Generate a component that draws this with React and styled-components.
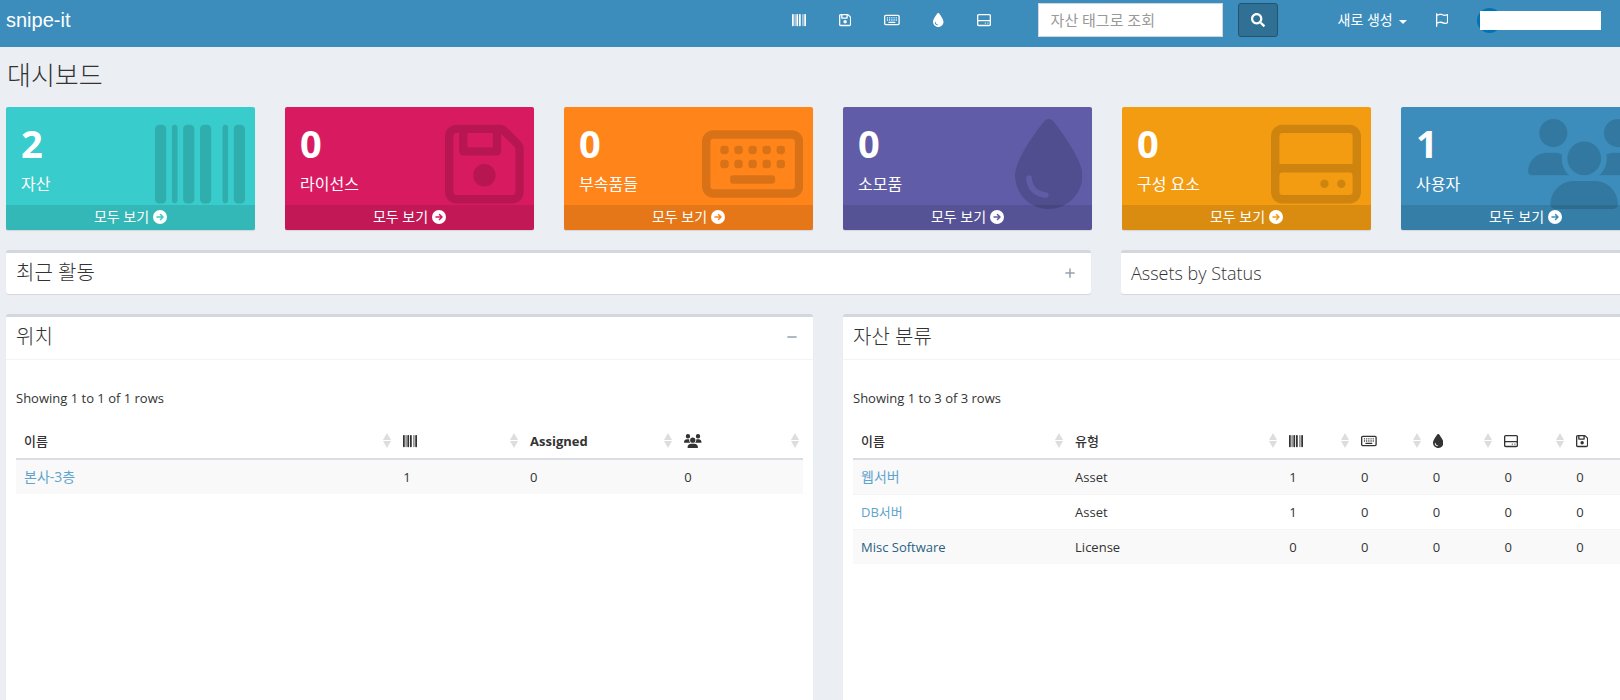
import React from "react";
import styled, { createGlobalStyle } from "styled-components";
import {
  FaBarcode,
  FaRegFloppyDisk,
  FaRegKeyboard,
  FaDroplet,
  FaRegHardDrive,
  FaUsers,
  FaRegFlag,
  FaPlus,
  FaMinus,
} from "react-icons/fa6";
import { FaSearch } from "react-icons/fa";

const GlobalStyle = createGlobalStyle`
  *, *::before, *::after { box-sizing: border-box; }
  body {
    margin: 0;
    background: #ebeff4;
    color: #333;
    font: 400 13px/20px "Open Sans", "Noto Sans CJK KR", sans-serif;
  }
  button, input { font: inherit; }
  a { text-decoration: none; }
  svg { display: block; flex: none; height: 1em; }
`;

/* Each glyph keeps the width of its own view box. */
const FloppyIcon = styled(FaRegFloppyDisk)`
  width: 0.875em;
`;
const KeyboardIcon = styled(FaRegKeyboard)`
  width: 1.125em;
`;
const DropletIcon = styled(FaDroplet)`
  width: 0.75em;
`;
const UsersIcon = styled(FaUsers)`
  width: 1.25em;
`;
const FlagIcon = styled(FaRegFlag)`
  width: 0.875em;
`;

const Page = styled.div`
  display: flex;
  flex-direction: column;
  min-height: 100vh;
  overflow-x: clip;
`;

const Header = styled.header`
  display: flex;
  align-items: flex-start;
  height: 47px;
  padding: 3px 18px 0 6px;
  background: #3c8dbc;
  color: #fff;
`;

const Brand = styled.a`
  margin-right: auto;
  color: #fff;
  font: 400 20px/34px "Liberation Sans", sans-serif;
`;

const IconNav = styled.nav`
  display: flex;
  gap: 33px;
  margin-right: 47px;
`;

const IconLink = styled.a`
  display: flex;
  align-items: center;
  height: 34px;
  color: #fff;
  font-size: 14px;
`;

const SearchForm = styled.form`
  display: flex;
  gap: 15px;
  margin-right: 60px;
`;

const SearchInput = styled.input`
  width: 185px;
  height: 34px;
  padding: 6px 12px;
  border: 1px solid #d2d6de;
  border-radius: 0;
  background: #fff;
  color: #555;
  font-size: 15px;
  &::placeholder { color: #999; opacity: 1; }
`;

const SearchButton = styled.button`
  display: flex;
  align-items: center;
  justify-content: center;
  width: 40px;
  height: 34px;
  padding: 0;
  border: 1px solid #23536f;
  border-radius: 3px;
  background: #307095;
  color: #fff;
  font-size: 14px;
`;

const CreateButton = styled.button`
  display: flex;
  align-items: center;
  gap: 6px;
  height: 34px;
  margin-right: 29px;
  padding: 0;
  border: 0;
  background: none;
  color: #fff;
  font-size: 14px;
`;

const Caret = styled.span`
  margin-top: 3px;
  border-top: 4px solid #fff;
  border-left: 4px solid transparent;
  border-right: 4px solid transparent;
`;

const UserButton = styled.button`
  position: relative;
  display: flex;
  align-items: center;
  width: 125px;
  height: 34px;
  margin-left: 29px;
  padding: 0;
  border: 0;
  background: none;
`;

const Avatar = styled.span`
  width: 25px;
  height: 25px;
  border-radius: 50%;
  background: #0073b7;
`;

const UserMask = styled.span`
  position: absolute;
  top: 8px;
  left: 3px;
  right: 1px;
  height: 19px;
  background: #fff;
`;

/* The grid is wider than the window, its right edge runs off screen. */
const Content = styled.main`
  display: flex;
  flex: 1;
  flex-direction: column;
  margin-right: -30px;
  padding-left: 6px;
`;

const Title = styled.h1`
  margin: 0;
  padding: 10px 0 14px 1px;
  font-size: 26px;
  font-weight: 300;
  line-height: 36px;
`;

const Row = styled.div`
  display: grid;
  grid-template-columns: ${(p) => p.$columns};
  gap: 30px;
  margin-bottom: ${(p) => (p.$fill ? 0 : 20)}px;
  flex: ${(p) => (p.$fill ? 1 : "none")};
`;

const Card = styled.a`
  position: relative;
  display: flex;
  flex-direction: column;
  border-radius: 2px;
  background: ${(p) => p.$color};
  box-shadow: 0 1px 1px rgba(0, 0, 0, 0.1);
  color: #fff;
`;

const CardBody = styled.div`
  height: 98px;
  padding: 9px 15px;
`;

const CardCount = styled.div`
  font-size: 38px;
  font-weight: 700;
  line-height: 54px;
`;

const CardLabel = styled.div`
  font-size: 16px;
  line-height: 28px;
`;

const CardIcon = styled.div`
  position: absolute;
  top: 12px;
  right: 10px;
  color: rgba(0, 0, 0, 0.15);
  font-size: 90px;
`;

const CardFooter = styled.div`
  display: flex;
  align-items: center;
  justify-content: center;
  gap: 4px;
  height: 25px;
  padding-bottom: 1px;
  background: rgba(0, 0, 0, 0.1);
  font-size: 14px;
`;

const Panel = styled.section`
  border-top: 3px solid #d2d6de;
  border-radius: ${(p) => (p.$open ? "3px 3px 0 0" : "3px")};
  background: #fff;
  box-shadow: 0 1px 1px rgba(0, 0, 0, 0.1);
`;

const PanelHeader = styled.div`
  display: flex;
  align-items: center;
  justify-content: space-between;
  height: ${(p) => (p.$divided ? 43 : 41)}px;
  padding: 0 15px 2px 10px;
  border-bottom: ${(p) => (p.$divided ? "1px solid #f4f4f4" : "0")};
`;

const PanelTitle = styled.h2`
  margin: 0;
  color: #333;
  font-size: ${(p) => (p.$hangul ? 20 : 18)}px;
  font-weight: 300;
  line-height: 26px;
`;

const PanelTool = styled.button`
  padding: 0;
  border: 0;
  background: none;
  color: #97a0b3;
  font-size: 12px;
`;

const PanelBody = styled.div`
  padding: 28px 10px 10px;
`;

const Summary = styled.p`
  margin: 0 0 15px;
`;

const Table = styled.table`
  width: 100%;
  table-layout: fixed;
  border-collapse: collapse;
`;

const Th = styled.th`
  height: 36px;
  padding: 0 4px 0 8px;
  border-bottom: 2px solid #dadee4;
  font-weight: ${(p) => (p.$hangul ? 500 : 700)};
  text-align: left;
`;

const ThInner = styled.div`
  display: flex;
  align-items: center;
  justify-content: space-between;
  font-size: 13px;
  svg { font-size: 14px; }
`;

const Sorter = styled.span`
  display: grid;
  gap: 1px;
  &::before, &::after {
    content: "";
    border: 0 solid transparent;
    border-left-width: 4px;
    border-right-width: 4px;
  }
  &::before { border-bottom: 7px solid #ddd; }
  &::after { border-top: 7px solid #ddd; }
`;

const Tr = styled.tr`
  &:nth-child(odd) { background: #f9f9f9; }
  & + & td { border-top: 1px solid #f4f4f4; }
`;

const Td = styled.td`
  height: 35px;
  padding: 0 8px;
`;

const RowLink = styled.a`
  color: ${(p) => (p.$visited ? "#296282" : "#5fa4cc")};
  font-size: ${(p) => (p.$hangul ? 14 : 13)}px;
`;

const navItems = [
  ["자산", FaBarcode],
  ["라이선스", FloppyIcon],
  ["부속품들", KeyboardIcon],
  ["소모품", DropletIcon],
  ["구성 요소", FaRegHardDrive],
];

const cards = [
  ["2", "자산", "#39cccc", FaBarcode],
  ["0", "라이선스", "#d81b60", FloppyIcon],
  ["0", "부속품들", "#ff851b", KeyboardIcon],
  ["0", "소모품", "#605ca8", DropletIcon],
  ["0", "구성 요소", "#f39c12", FaRegHardDrive],
  ["1", "사용자", "#3c8dbc", UsersIcon],
];

const locations = {
  columns: [
    { label: "이름", width: "48.2%" },
    { label: "자산", icon: FaBarcode, width: "16.1%" },
    { label: "Assigned", width: "19.6%" },
    { label: "사용자", icon: UsersIcon, width: "16.1%" },
  ],
  rows: [["본사-3층", "1", "0", "0"]],
};

const categories = {
  columns: [
    { label: "이름", width: "27.2%" },
    { label: "유형", width: "27.2%" },
    { label: "자산", icon: FaBarcode },
    { label: "부속품들", icon: KeyboardIcon },
    { label: "소모품", icon: DropletIcon },
    { label: "구성 요소", icon: FaRegHardDrive },
    { label: "라이선스", icon: FloppyIcon },
  ],
  rows: [
    ["웹서버", "Asset", "1", "0", "0", "0", "0"],
    ["DB서버", "Asset", "1", "0", "0", "0", "0"],
    ["Misc Software", "License", "0", "0", "0", "0", "0"],
  ],
  visited: 2,
};

const startsWithHangul = (text) => /^[가-힣]/.test(text);

function ArrowBadge({ color }) {
  return (
    <svg viewBox="0 0 28 28" width="1em" aria-hidden="true">
      <circle cx="14" cy="14" r="14" fill="currentColor" />
      <path
        d="M8 14h12M15 9l5 5-5 5"
        fill="none"
        stroke={color}
        strokeWidth="3"
        strokeLinecap="round"
        strokeLinejoin="round"
      />
    </svg>
  );
}

function DataTable({ data }) {
  return (
    <Table>
      <colgroup>
        {data.columns.map((c) => (
          <col key={c.label} width={c.width} />
        ))}
      </colgroup>
      <thead>
        <tr>
          {data.columns.map(({ label, icon: Icon }) => (
            <Th
              key={label}
              scope="col"
              aria-label={label}
              $hangul={startsWithHangul(label)}
            >
              <ThInner>
                {Icon ? <Icon /> : <span>{label}</span>}
                <Sorter />
              </ThInner>
            </Th>
          ))}
        </tr>
      </thead>
      <tbody>
        {data.rows.map((row, r) => (
          <Tr key={row[0]}>
            {row.map((cell, i) => (
              <Td key={i}>
                {i === 0 ? (
                  <RowLink
                    href="#"
                    $visited={r === data.visited}
                    $hangul={startsWithHangul(cell)}
                  >
                    {cell}
                  </RowLink>
                ) : (
                  cell
                )}
              </Td>
            ))}
          </Tr>
        ))}
      </tbody>
    </Table>
  );
}

export default function App() {
  return (
    <Page>
      <GlobalStyle />
      <Header>
        <Brand href="#">snipe-it</Brand>
        <IconNav>
          {navItems.map(([label, Icon]) => (
            <IconLink key={label} href="#" aria-label={label}>
              <Icon />
            </IconLink>
          ))}
        </IconNav>
        <SearchForm role="search" onSubmit={(e) => e.preventDefault()}>
          <SearchInput
            type="text"
            aria-label="자산 태그로 조회"
            placeholder="자산 태그로 조회"
          />
          <SearchButton type="submit" aria-label="조회">
            <FaSearch />
          </SearchButton>
        </SearchForm>
        <CreateButton type="button">
          새로 생성
          <Caret />
        </CreateButton>
        <IconLink href="#" aria-label="알림">
          <FlagIcon />
        </IconLink>
        <UserButton type="button" aria-label="사용자 메뉴">
          <Avatar />
          <UserMask />
        </UserButton>
      </Header>
      <Content>
        <Title>대시보드</Title>
        <Row $columns="repeat(6, 1fr)">
          {cards.map(([count, label, color, Icon]) => (
            <Card key={label} href="#" $color={color}>
              <CardBody>
                <CardCount>{count}</CardCount>
                <CardLabel>{label}</CardLabel>
              </CardBody>
              <CardIcon>
                <Icon />
              </CardIcon>
              <CardFooter>
                모두 보기 <ArrowBadge color={color} />
              </CardFooter>
            </Card>
          ))}
        </Row>
        <Row $columns="minmax(0, 1085fr) minmax(0, 529fr)">
          <Panel>
            <PanelHeader>
              <PanelTitle $hangul>최근 활동</PanelTitle>
              <PanelTool type="button" aria-label="펼치기">
                <FaPlus />
              </PanelTool>
            </PanelHeader>
          </Panel>
          <Panel>
            <PanelHeader>
              <PanelTitle>Assets by Status</PanelTitle>
            </PanelHeader>
          </Panel>
        </Row>
        <Row $columns="repeat(2, minmax(0, 1fr))" $fill>
          <Panel $open>
            <PanelHeader $divided>
              <PanelTitle $hangul>위치</PanelTitle>
              <PanelTool type="button" aria-label="접기">
                <FaMinus />
              </PanelTool>
            </PanelHeader>
            <PanelBody>
              <Summary>Showing 1 to 1 of 1 rows</Summary>
              <DataTable data={locations} />
            </PanelBody>
          </Panel>
          <Panel $open>
            <PanelHeader $divided>
              <PanelTitle $hangul>자산 분류</PanelTitle>
            </PanelHeader>
            <PanelBody>
              <Summary>Showing 1 to 3 of 3 rows</Summary>
              <DataTable data={categories} />
            </PanelBody>
          </Panel>
        </Row>
      </Content>
    </Page>
  );
}
